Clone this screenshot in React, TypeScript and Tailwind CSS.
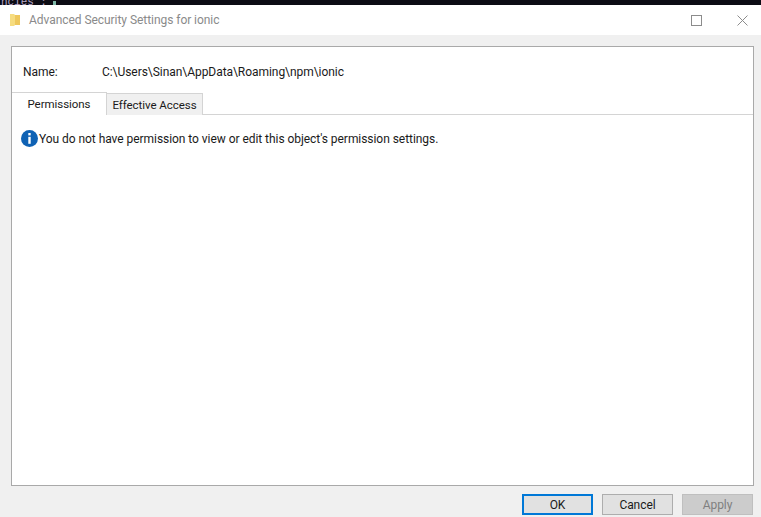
export default function App() {
  return (
    <div className="w-[761px] h-[517px] flex flex-col overflow-hidden bg-[#f0f0f0] text-[12px] leading-[16px] tracking-[-0.05px] text-[#1a1a1a] font-['Roboto',sans-serif]">
      {/* terminal peeking out behind the dialog */}
      <div className="h-[5px] shrink-0 bg-[#0c0c14] overflow-hidden flex items-end pl-[1px] gap-[6px]">
        <span className="text-[11px] leading-[5px] text-[#b9a7c9] font-['Liberation_Mono',monospace]">ncies :</span>
        <span className="w-[3px] h-[4px] bg-[#7fb8a8]" />
      </div>

      <div className="h-[30px] shrink-0 bg-white flex items-center pl-[10px]">
        <svg width="12" height="16" viewBox="0 0 12 16" className="shrink-0">
          <path d="M0 2h4l1 1h4v10H5l-1 1H0z" fill="#f6dc80" />
          <path d="M5 3h5v10H5z" fill="#eec75c" />
        </svg>
        <span className="ml-[7px] text-[#8a8a8a]">Advanced Security Settings for ionic</span>
        <div className="ml-auto flex items-center">
          <svg width="11" height="11" viewBox="0 0 11 11" className="mr-[35px]">
            <rect x="0.5" y="0.5" width="10" height="10" fill="none" stroke="#8c8c8c" />
          </svg>
          <svg width="11" height="11" viewBox="0 0 11 11" className="mr-[13px]">
            <path d="M0.5 0.5l10 10M10.5 0.5l-10 10" fill="none" stroke="#8c8c8c" />
          </svg>
        </div>
      </div>

      <div className="flex-1 flex flex-col pl-[11px] pt-[11px] pr-[7px]">
        <div className="h-[440px] shrink-0 bg-white border border-[#a9a9a9] flex flex-col">
          <div className="h-[45px] shrink-0 flex items-center pl-[11px] pt-[4px]">
            <span className="w-[79px]">Name:</span>
            <span>C:\Users\Sinan\AppData\Roaming\npm\ionic</span>
          </div>

          <div className="h-[23px] shrink-0 flex border-b border-[#d4d4d4] text-[11.5px]">
            <div className="w-[95px] h-[23px] bg-white border-t border-r border-[#d4d4d4] flex items-center justify-center">
              Permissions
            </div>
            <div className="w-[96px] h-[22px] mt-[1px] bg-[#f0f0f0] border-t border-r border-[#d4d4d4] flex items-center justify-center">
              Effective Access
            </div>
          </div>

          <div className="flex items-center pl-[9px] pt-[15px]">
            <svg width="17" height="17" viewBox="0 0 17 17" className="shrink-0">
              <circle cx="8.5" cy="8.5" r="8.5" fill="#0f62b4" />
              <rect x="7.3" y="3" width="2.4" height="2.4" fill="#fff" />
              <rect x="7.3" y="6.8" width="2.4" height="7" fill="#fff" />
            </svg>
            <span className="ml-[1px]">You do not have permission to view or edit this object's permission settings.</span>
          </div>
        </div>

        <div className="flex justify-end gap-[9px] mt-[8px] pr-[1px]">
          <button className="w-[71px] h-[21px] bg-[#e1e1e1] border-2 border-[#0078d7] flex items-center justify-center">OK</button>
          <button className="w-[71px] h-[21px] bg-[#e1e1e1] border border-[#adadad] flex items-center justify-center">Cancel</button>
          <button className="w-[71px] h-[21px] bg-[#cccccc] border border-[#bfbfbf] text-[#7f7f7f] flex items-center justify-center">Apply</button>
        </div>
      </div>
    </div>
  );
}
